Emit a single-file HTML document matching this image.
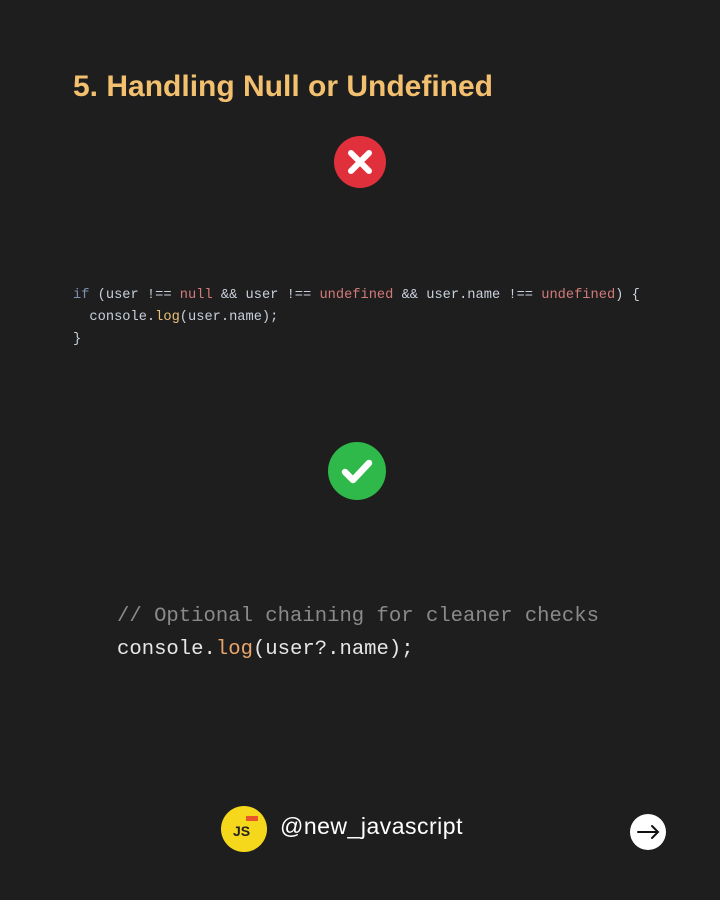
<!DOCTYPE html>
<html><head><meta charset="utf-8"><style>
body{margin:0;width:720px;height:900px;background:#1e1e1e;position:relative;overflow:hidden;font-family:"Liberation Sans",sans-serif}
.t{position:absolute;left:73px;top:70px;font-size:30px;font-weight:bold;color:#f2c06e;letter-spacing:0;white-space:nowrap}
.code{position:absolute;left:73px;top:285px;font-family:"Liberation Mono",monospace;font-size:13.7px;line-height:22px;color:#c9d0dc;white-space:pre}
.k{color:#7f8fb0}.r{color:#d27a7a}.f{color:#e8c17a}
.code2{position:absolute;left:117px;top:600px;font-family:"Liberation Mono",monospace;font-size:20.6px;line-height:33px;color:#e6e6e6;white-space:pre}
.c{color:#8a8a8a}.o{color:#e8a46a}
.h{position:absolute;left:280px;top:813px;color:#fff;font-size:23px;letter-spacing:0.5px;white-space:nowrap}
</style></head><body>
<div class="t">5. Handling Null or Undefined</div>
<svg style="position:absolute;left:333px;top:135px" width="54" height="54"><circle cx="27" cy="27" r="26" fill="#e0303c"/><path d="M18 18L36 36M36 18L18 36" stroke="#fff" stroke-width="6" stroke-linecap="round"/></svg>
<div class="code"><span class="k">if</span> (user !== <span class="r">null</span> &amp;&amp; user !== <span class="r">undefined</span> &amp;&amp; user.name !== <span class="r">undefined</span>) {
  console.<span class="f">log</span>(user.name);
}</div>
<svg style="position:absolute;left:328px;top:442px" width="58" height="58"><circle cx="29" cy="29" r="29" fill="#2eb94a"/><path d="M17 30L25 38L41 21" stroke="#fff" stroke-width="6.5" fill="none" stroke-linecap="round" stroke-linejoin="round"/></svg>
<div class="code2"><span class="c">// Optional chaining for cleaner checks</span>
console.<span class="o">log</span>(user?.name);</div>
<svg style="position:absolute;left:221px;top:806px" width="48" height="46"><circle cx="23" cy="23" r="23" fill="#f5d81c"/><rect x="25" y="10" width="12" height="5" fill="#e8562a"/><text x="12" y="30" font-family="Liberation Sans" font-weight="bold" font-size="14" fill="#222">JS</text></svg>
<div class="h">@new_javascript</div>
<svg style="position:absolute;left:629px;top:813px" width="38" height="38"><circle cx="19" cy="19" r="18" fill="#fff"/><path d="M9 19H29M23 13L29 19L23 25" stroke="#111" stroke-width="2" fill="none" stroke-linecap="round"/></svg>
</body></html>
